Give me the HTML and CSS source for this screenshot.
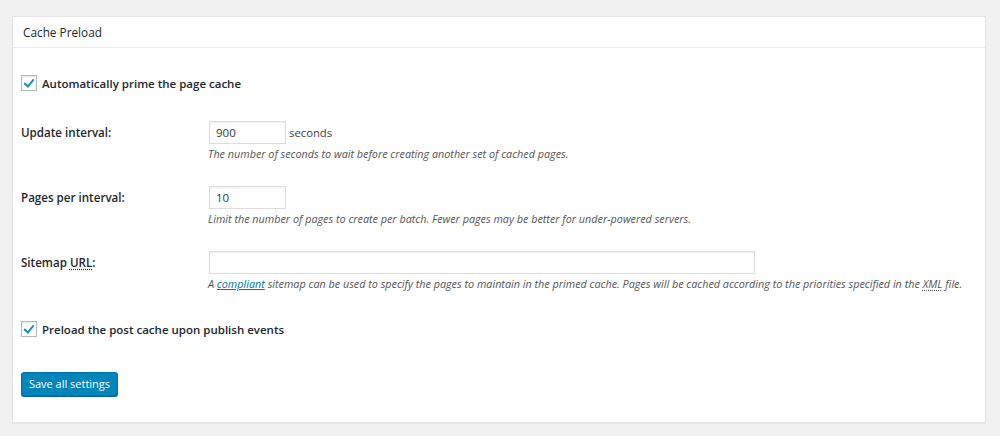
FILE: index.html
```html
<!DOCTYPE html>
<html>
<head>
<meta charset="utf-8">
<link rel="stylesheet" href="styles.css">
</head>
<body>
<div class="panel">
  <div class="panel-head">Cache Preload</div>
  <div class="panel-body">
    <label class="check-row"><span class="cb checked"></span><span>Automatically prime the page cache</span></label>

    <div class="field first">
      <div class="field-label">Update interval:</div>
      <div class="field-control">
        <div class="inline"><span class="input small">900</span><span class="unit">seconds</span></div>
        <div class="desc">The number of seconds to wait before creating another set of cached pages.</div>
      </div>
    </div>

    <div class="field">
      <div class="field-label">Pages per interval:</div>
      <div class="field-control">
        <div class="inline"><span class="input small">10</span></div>
        <div class="desc">Limit the number of pages to create per batch. Fewer pages may be better for under-powered servers.</div>
      </div>
    </div>

    <div class="field">
      <div class="field-label">Sitemap <abbr class="abbr">URL</abbr>:</div>
      <div class="field-control">
        <div class="inline"><span class="input wide"></span></div>
        <div class="desc">A <a class="link" href="#">compliant</a> sitemap can be used to specify the pages to maintain in the primed cache. Pages will be cached according to the priorities specified in the <abbr class="abbr">XML</abbr> file.</div>
      </div>
    </div>

    <label class="check-row second"><span class="cb checked"></span><span>Preload the post cache upon publish events</span></label>

    <div class="actions"><button class="btn">Save all settings</button></div>
  </div>
</div>
</body>
</html>
```

FILE: styles.css
```css
html, body {
  margin: 0;
  padding: 0;
  background: #f1f1f1;
  font-family: "Open Sans", "Noto Sans", sans-serif;
  color: #23282d;
}
body {
  padding: 16px 14px 13px 12px;
}
.panel {
  background: #fff;
  border: 1px solid #e5e5e5;
  box-shadow: 0 1px 1px rgba(0,0,0,0.04);
  height: 407px;
  box-sizing: border-box;
}
.panel-head {
  height: 30px;
  border-bottom: 1px solid #eee;
  padding: 0 10px;
  font-size: 11.8px;
  line-height: 31px;
  color: #23282d;
}
.panel-body {
  padding: 0 8px;
}
.check-row {
  display: flex;
  align-items: center;
  gap: 5px;
  font-size: 11.5px;
  font-weight: 600;
  height: 16px;
  margin-top: 27px;
  color: #23282d;
}
.check-row.second {
  margin-top: 30px;
}
.cb {
  width: 14px;
  height: 14px;
  border: 1px solid #b4b9be;
  background: #fff;
  box-shadow: inset 0 1px 2px rgba(0,0,0,0.1);
  position: relative;
  flex: none;
}
.cb.checked::after {
  content: "";
  position: absolute;
  left: 4px;
  top: 1px;
  width: 4px;
  height: 8px;
  border-right: 2px solid #1e8cbe;
  border-bottom: 2px solid #1e8cbe;
  transform: rotate(40deg);
}
.field {
  display: flex;
  margin-top: 25px;
}
.field.first {
  margin-top: 30px;
}
.field-label {
  width: 188px;
  flex: none;
  font-size: 11.6px;
  font-weight: 600;
  line-height: 23px;
}
.field-control {
  display: flex;
  flex-direction: column;
}
.inline {
  display: flex;
  align-items: center;
  height: 23px;
}
.input {
  box-sizing: border-box;
  height: 23px;
  border: 1px solid #ddd;
  box-shadow: inset 0 1px 2px rgba(0,0,0,0.07);
  font-size: 11.5px;
  line-height: 21px;
  padding: 0 6px;
  color: #32373c;
}
.input.small { width: 77px; }
.input.wide { width: 546px; }
.unit {
  font-size: 11.3px;
  margin-left: 3px;
  color: #444;
}
.desc {
  font-size: 10.8px;
  font-style: italic;
  color: #555;
  margin-top: 2px;
  line-height: 15px;
  margin-left: -1px;
}
.abbr {
  text-decoration: underline dotted;
  text-underline-offset: 2px;
}
.link {
  color: #0073aa;
  text-decoration: underline;
}
.actions {
  margin-top: 34px;
}
.btn {
  background: #0085ba;
  border: 1px solid #0073aa;
  border-radius: 3px;
  color: #fff;
  font-family: inherit;
  font-size: 11px;
  height: 24px;
  width: 97px;
  padding: 0;
  box-shadow: 0 1px 0 #006799;
}
```
